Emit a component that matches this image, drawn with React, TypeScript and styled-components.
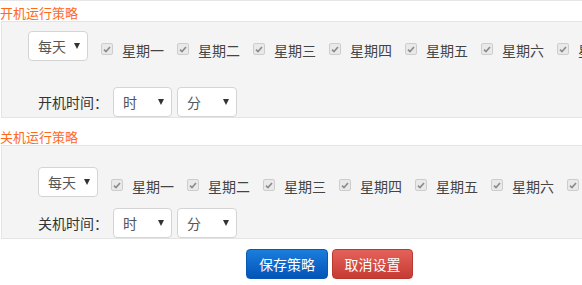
import styled, { createGlobalStyle } from "styled-components";

const GlobalStyle = createGlobalStyle`
  html, body {
    margin: 0;
    padding: 0;
    background: #fff;
    overflow: hidden;
  }
  body {
    font-family: "Noto Sans CJK SC", "Noto Sans", sans-serif;
    color: #333;
  }
`;

const Page = styled.div`
  width: 582px;
  height: 285px;
  border-top: 1px solid #e6e6e6;
  box-sizing: border-box;
  overflow: hidden;
`;

const Title = styled.div<{ $top: number }>`
  margin-top: ${({ $top }) => $top}px;
  height: 16px;
  line-height: 16px;
  font-size: 13px;
  color: #ff6a1a;
  white-space: nowrap;
`;

const Panel = styled.div<{ $padTop: number; $gap: number }>`
  margin-left: 1px;
  width: 640px;
  box-sizing: border-box;
  background: #f4f4f4;
  border: 1px solid #e4e4e4;
  border-right: none;
  padding-top: ${({ $padTop }) => $padTop}px;
  padding-bottom: 0;
  display: flex;
  flex-direction: column;
  gap: ${({ $gap }) => $gap}px;
`;

const Row = styled.div<{ $left: number }>`
  display: flex;
  align-items: center;
  padding-left: ${({ $left }) => $left}px;
  white-space: nowrap;
`;

const Select = styled.div<{ $w: number }>`
  width: ${({ $w }) => $w}px;
  height: 30px;
  box-sizing: border-box;
  background: #fff;
  border: 1px solid #d4d4d4;
  border-radius: 4px;
  display: flex;
  align-items: center;
  justify-content: space-between;
  padding: 0 7px 0 9px;
  font-size: 14px;
  color: #555;
  flex-shrink: 0;
`;

const Caret = styled.span`
  width: 0;
  height: 0;
  border-left: 3px solid transparent;
  border-right: 3px solid transparent;
  border-top: 6px solid #333;
`;

const Days = styled.div`
  display: flex;
  margin-left: 13px;
  margin-top: 8px;
`;

const Day = styled.label`
  display: flex;
  align-items: center;
  gap: 9px;
  margin-right: 13px;
  font-size: 14px;
  color: #444;
  line-height: 16px;
`;

const Box = styled.span`
  width: 12px;
  height: 12px;
  box-sizing: border-box;
  border: 1px solid #cdcdcd;
  border-radius: 2px;
  background: #e9e9e9;
  display: flex;
  align-items: center;
  justify-content: center;
  margin-top: -2px;
`;

const Label = styled.span`
  font-size: 14px;
  color: #333;
  width: 75px;
`;

const TimeSelects = styled.div`
  display: flex;
  gap: 5px;
`;

const Actions = styled.div`
  display: flex;
  gap: 4px;
  margin-top: 10px;
  padding-left: 246px;
`;

const Button = styled.button<{ $kind: "primary" | "danger" }>`
  height: 30px;
  width: ${({ $kind }) => ($kind === "primary" ? 82 : 81)}px;
  border-radius: 4px;
  font-family: inherit;
  font-size: 14px;
  color: #fff;
  padding: 0;
  cursor: pointer;
  border: 1px solid
    ${({ $kind }) => ($kind === "primary" ? "#0a58b0" : "#b8392f")};
  background: ${({ $kind }) =>
    $kind === "primary"
      ? "linear-gradient(#1a7ddc, #0454b8)"
      : "linear-gradient(#e4625a, #c63b33)"};
`;

const days = ["星期一", "星期二", "星期三", "星期四", "星期五", "星期六", "星期日"];

function Check() {
  return (
    <Box>
      <svg width="8" height="7" viewBox="0 0 8 7">
        <path d="M1 3.6 L3 5.6 L7 1" fill="none" stroke="#8a8a8a" strokeWidth="1.6" />
      </svg>
    </Box>
  );
}

function Strategy(props: { kind: string; selLeft: number; padTop: number; gap: number }) {
  return (
    <Panel $padTop={props.padTop} $gap={props.gap}>
      <Row $left={props.selLeft}>
        <Select $w={60}>
          每天
          <Caret />
        </Select>
        <Days>
          {days.map((d) => (
            <Day key={d}>
              <Check />
              {d}
            </Day>
          ))}
        </Days>
      </Row>
      <Row $left={36}>
        <Label>{props.kind}机时间：</Label>
        <TimeSelects>
          <Select $w={59}>
            时
            <Caret />
          </Select>
          <Select $w={60}>
            分
            <Caret />
          </Select>
        </TimeSelects>
      </Row>
    </Panel>
  );
}

export default function App() {
  return (
    <Page>
      <GlobalStyle />
      <Title $top={4}>开机运行策略</Title>
      <Strategy kind="开" selLeft={26} padTop={9} gap={26} />
      <Title $top={11}>关机运行策略</Title>
      <Strategy kind="关" selLeft={36} padTop={21} gap={11} />
      <Actions>
        <Button $kind="primary">保存策略</Button>
        <Button $kind="danger">取消设置</Button>
      </Actions>
    </Page>
  );
}
